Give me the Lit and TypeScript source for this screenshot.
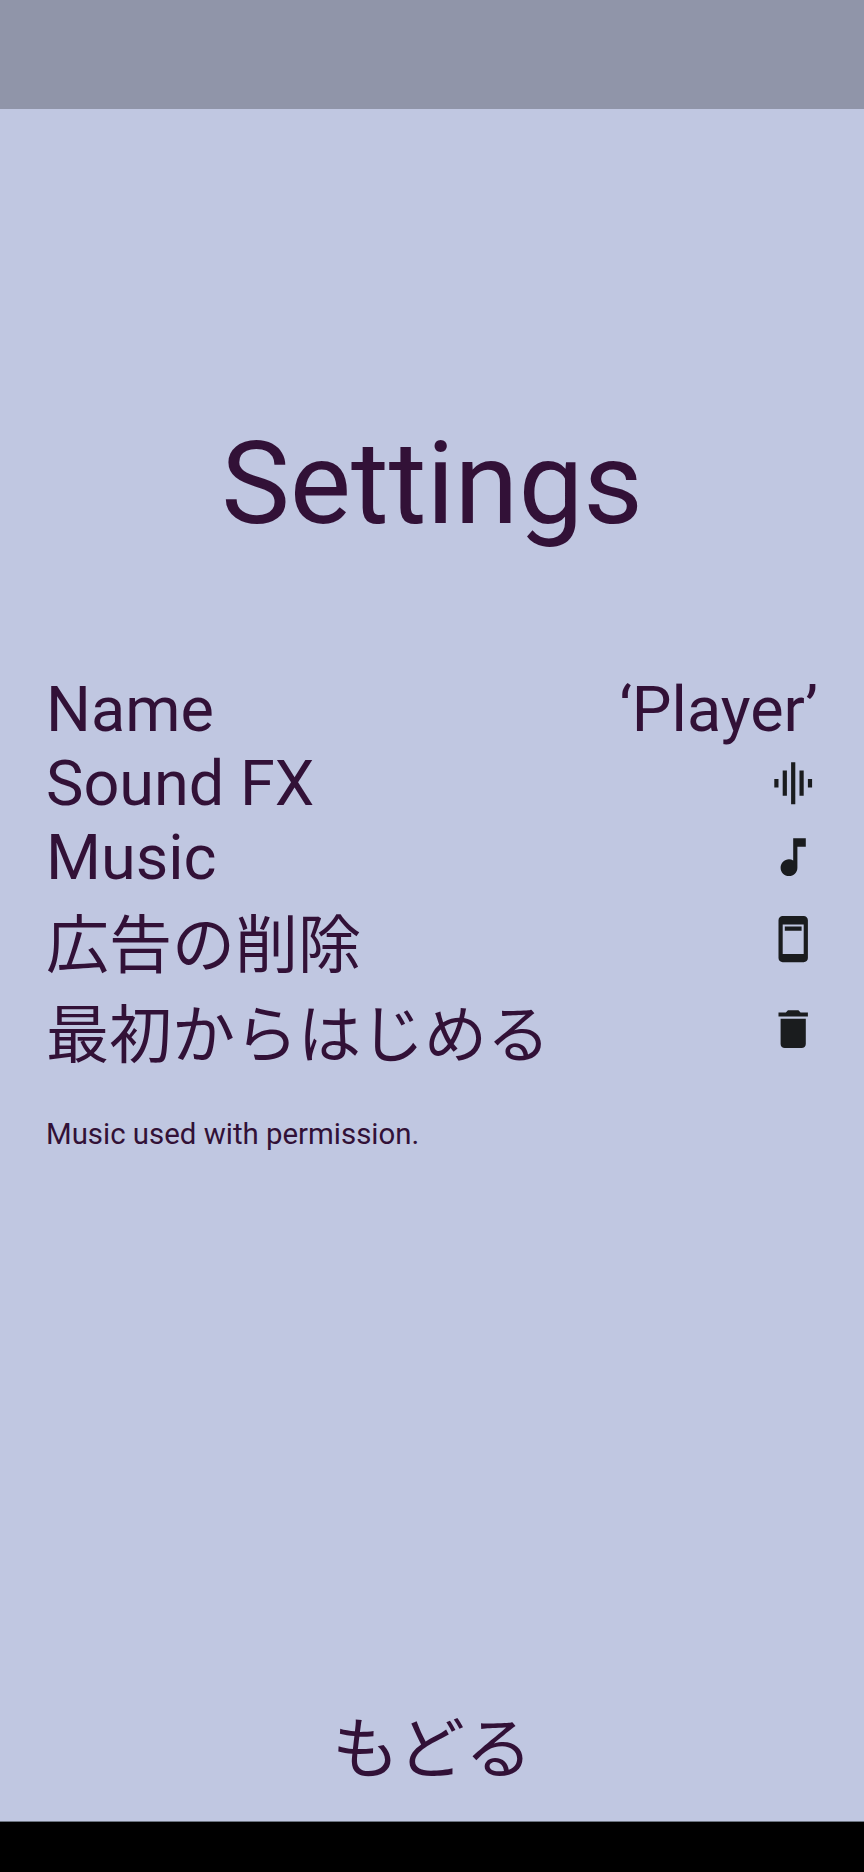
import { LitElement, html, css, svg } from "lit";
import { customElement } from "lit/decorators.js";

const ICONS: Record<string, string> = {
  sound: "M7 18h2V6H7v12zm4 4h2V2h-2v20zm-8-8h2v-4H3v4zm12 4h2V6h-2v12zm4-8v4h2v-4h-2z",
  music: "M12 3v10.55c-.59-.34-1.27-.55-2-.55-2.21 0-4 1.79-4 4s1.79 4 4 4 4-1.79 4-4V7h4V3h-6z",
  ads: "M17 1H7c-1.100 0-2 .9-2 2v18c0 1.100.9 2 2 2h10c1.100 0 2-.9 2-2V3c0-1.100-.9-2-2-2zm0 18H7V5h10v14zM8 6h8v2H8z",
  trash: "M6 19c0 1.100.9 2 2 2h8c1.100 0 2-.9 2-2V7H6v12zM19 4h-3.500l-1-1h-5l-1 1H5v2h14V4z",
};
const icon = (n: string) => html`<svg class="icon" viewBox="0 0 24 24">${svg`<path d=${ICONS[n]}></path>`}</svg>`;

@customElement("app-root")
export class AppRoot extends LitElement {
  static styles = css`
    :host { display: flex; flex-direction: column; height: 1872px; overflow: hidden; background: #c0c7e1; color: #321137; font-family: Roboto, "Noto Sans CJK JP", sans-serif; }
    .status { height: 109px; background: #9095a9; flex: none; }
    main { flex: 1; display: flex; flex-direction: column; padding: 0 46px; }
    h1 { margin: 307px 0 0; font-size: 115.5px; line-height: 135px; font-weight: 400; text-align: center; }
    .list { margin-top: 121px; }
    .row { display: flex; justify-content: space-between; align-items: center; font-size: 63px; height: 74px; line-height: 74px; white-space: nowrap; }
    .row span { margin-top: 2px; }
    .jp { height: 90px; line-height: 90px; }
    .jp span { margin-top: 13px; }
    .icon { width: 50.4px; height: 50.4px; fill: #1a1c1e; }
    .note { margin: 43px 0 0; font-size: 29.4px; line-height: 34px; }
    .back { margin-top: auto; text-align: center; font-size: 67.2px; line-height: 90px; padding-bottom: 26px; }
    .nav { height: 50px; background: #000; border-top: 1px solid #6c7480; flex: none; }
  `;
  render() {
    return html`
      <div class="status"></div>
      <main>
        <h1>Settings</h1>
        <div class="list">
          <div class="row"><span>Name</span><span>‘Player’</span></div>
          <div class="row"><span>Sound FX</span>${icon("sound")}</div>
          <div class="row"><span>Music</span>${icon("music")}</div>
          <div class="row jp"><span>広告の削除</span>${icon("ads")}</div>
          <div class="row jp"><span>最初からはじめる</span>${icon("trash")}</div>
        </div>
        <p class="note">Music used with permission.</p>
        <div class="back">もどる</div>
      </main>
      <div class="nav"></div>
    `;
  }
}
